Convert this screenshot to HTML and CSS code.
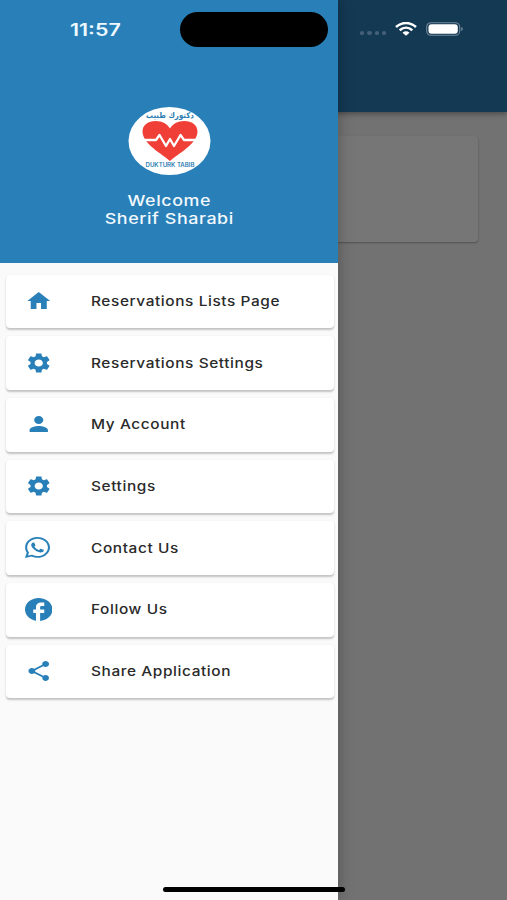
FILE: index.html
```html
<!DOCTYPE html>
<html lang="en">
<head>
    <meta charset="UTF-8">
    <meta name="viewport" content="width=device-width, initial-scale=1.0">
    <title>Dukturk Tabib</title>
    <link rel="stylesheet" href="styles.css">
</head>
<body>
    <div class="page">
        <div class="app-bar"></div>
        <div class="page-card"></div>
    </div>

    <div class="drawer">
        <div class="drawer-header">
            <svg class="logo" viewBox="0 0 82 68">
                <ellipse cx="41" cy="34" rx="41" ry="34" fill="#fff"/>
                <path d="M41.500 54C34 47 14 37 14 24.500C14 18 20 14 27 14C34 14 39 17 41.500 21.500C44 17 49 14 56 14C63 14 69 18 69 24.500C69 37 49 47 41.500 54Z" fill="#ef3f36"/>
                <path d="M12 33H27.500L31 28L37.500 39L41.500 32L45.500 39L52 28L55.500 33H71" fill="none" stroke="#fff" stroke-width="2.300" stroke-linejoin="round"/>
                <text class="logo-arabic" x="41.500" y="10.500" text-anchor="middle" textLength="48" lengthAdjust="spacingAndGlyphs">دكتورك طبيب</text>
                <text class="logo-latin" x="41.500" y="60.300" text-anchor="middle" textLength="49" lengthAdjust="spacingAndGlyphs">DUKTURK TABIB</text>
            </svg>
            <div class="welcome">Welcome<br>Sherif Sharabi</div>
        </div>
        <div class="menu">
            <a class="menu-item">
                <svg class="icon" viewBox="0 0 24 24" preserveAspectRatio="none"><path d="M10 20v-6h4v6h5v-8h3L12 3 2 12h3v8z"/></svg>
                <span class="label">Reservations Lists Page</span>
            </a>
            <a class="menu-item">
                <svg class="icon" viewBox="0 0 24 24" preserveAspectRatio="none"><path d="M19.140 12.940c.04-.3.060-.61.060-.94 0-.32-.02-.64-.07-.94l2.030-1.580c.18-.14.230-.41.120-.61l-1.920-3.320c-.12-.22-.37-.29-.59-.22l-2.390.96c-.5-.38-1.030-.7-1.620-.94l-.36-2.540c-.04-.24-.24-.41-.48-.41h-3.840c-.24 0-.43.170-.47.410l-.36 2.540c-.59.240-1.130.570-1.620.940l-2.390-.96c-.22-.08-.47 0-.59.220L2.740 8.870c-.12.210-.08.470.120.610l2.030 1.580c-.05.300-.09.630-.09.940s.02.640.070.940l-2.030 1.580c-.18.140-.23.410-.12.610l1.920 3.320c.12.220.370.290.590.220l2.390-.96c.5.380 1.030.700 1.620.940l.36 2.540c.05.240.240.410.480.410h3.840c.24 0 .44-.17.470-.41l.36-2.540c.59-.24 1.130-.56 1.620-.94l2.390.960c.22.080.470 0 .59-.22l1.920-3.320c.12-.22.070-.47-.12-.61zM12 15.600c-1.980 0-3.600-1.620-3.600-3.600s1.620-3.600 3.600-3.600 3.600 1.620 3.600 3.600-1.620 3.600-3.600 3.600z"/></svg>
                <span class="label">Reservations Settings</span>
            </a>
            <a class="menu-item">
                <svg class="icon" viewBox="0 0 24 24" preserveAspectRatio="none"><path d="M12 12c2.210 0 4-1.790 4-4s-1.790-4-4-4-4 1.790-4 4 1.790 4 4 4zm0 2c-2.670 0-8 1.340-8 4v2h16v-2c0-2.660-5.330-4-8-4z"/></svg>
                <span class="label">My Account</span>
            </a>
            <a class="menu-item">
                <svg class="icon" viewBox="0 0 24 24" preserveAspectRatio="none"><path d="M19.140 12.940c.04-.3.060-.61.060-.94 0-.32-.02-.64-.07-.94l2.030-1.580c.18-.14.230-.41.120-.61l-1.920-3.320c-.12-.22-.37-.29-.59-.22l-2.390.96c-.5-.38-1.030-.7-1.620-.94l-.36-2.540c-.04-.24-.24-.41-.48-.41h-3.840c-.24 0-.43.170-.47.410l-.36 2.540c-.59.240-1.130.570-1.620.940l-2.390-.96c-.22-.08-.47 0-.59.220L2.740 8.870c-.12.210-.08.470.120.610l2.030 1.580c-.05.300-.09.630-.09.940s.02.640.070.940l-2.030 1.580c-.18.140-.23.410-.12.610l1.920 3.320c.12.220.370.290.590.220l2.390-.96c.5.380 1.030.700 1.620.940l.36 2.540c.05.240.240.410.480.410h3.840c.24 0 .44-.17.470-.41l.36-2.540c.59-.24 1.130-.56 1.620-.94l2.390.960c.22.080.470 0 .59-.22l1.920-3.320c.12-.22.070-.47-.12-.61zM12 15.600c-1.980 0-3.600-1.620-3.600-3.600s1.620-3.600 3.600-3.600 3.600 1.620 3.600 3.600-1.620 3.600-3.600 3.600z"/></svg>
                <span class="label">Settings</span>
            </a>
            <a class="menu-item">
                <svg class="icon whatsapp" viewBox="0 0 448 448" preserveAspectRatio="none"><path d="M380.900 65.100C339 23.100 283.200 0 223.900 0 101.500 0 1.900 99.600 1.900 222c0 39.100 10.200 77.300 29.600 111L0 448l117.700-30.900c32.400 17.700 68.900 27 106.100 27h.1c122.300 0 224.100-99.600 224.100-222 0-59.300-25.200-115-67.100-157zM223.900 406.700c-33.200 0-65.700-8.900-94-25.700l-6.700-4-69.800 18.300L72 327.200l-4.400-7c-18.500-29.400-28.200-63.300-28.200-98.200 0-101.700 82.800-184.500 184.600-184.500 49.300 0 95.600 19.200 130.400 54.100 34.800 34.900 56.200 81.200 56.100 130.500 0 101.800-84.900 184.600-186.600 184.600zm101.200-138.200c-5.500-2.800-32.800-16.200-37.900-18-5.100-1.900-8.800-2.800-12.500 2.800-3.700 5.600-14.300 18-17.600 21.800-3.200 3.700-6.500 4.200-12 1.400-32.600-16.300-54-29.100-75.500-66-5.700-9.800 5.700-9.100 16.300-30.300 1.800-3.700.9-6.900-.5-9.700-1.400-2.800-12.500-30.100-17.100-41.200-4.500-10.800-9.100-9.300-12.500-9.500-3.200-.2-6.900-.2-10.600-.2-3.700 0-9.700 1.400-14.800 6.900-5.100 5.600-19.400 19-19.400 46.300 0 27.300 19.900 53.700 22.600 57.400 2.800 3.700 39.100 59.700 94.800 83.800 35.200 15.200 49 16.500 66.600 13.900 10.700-1.600 32.800-13.400 37.400-26.400 4.600-13 4.600-24.100 3.200-26.400-1.300-2.500-5-3.900-10.500-6.600z"/></svg>
                <span class="label">Contact Us</span>
            </a>
            <a class="menu-item">
                <svg class="icon facebook" viewBox="2 2 20 20" preserveAspectRatio="none"><path d="M22 12c0-5.520-4.480-10-10-10S2 6.480 2 12c0 4.840 3.440 8.870 8 9.800V15H8v-3h2V9.500C10 7.570 11.570 6 13.500 6H16v3h-2c-.55 0-1 .45-1 1v2h3v3h-3v6.950c5.050-.5 9-4.760 9-9.950z"/></svg>
                <span class="label">Follow Us</span>
            </a>
            <a class="menu-item">
                <svg class="icon" viewBox="0 0 24 24" preserveAspectRatio="none"><path d="M18 16.080c-.76 0-1.440.300-1.960.770L8.910 12.700c.05-.23.090-.46.090-.7s-.04-.47-.09-.7l7.050-4.110c.54.500 1.250.810 2.040.810 1.660 0 3-1.340 3-3s-1.340-3-3-3-3 1.340-3 3c0 .24.040.470.090.7L8.040 9.810C7.500 9.310 6.790 9 6 9c-1.660 0-3 1.340-3 3s1.340 3 3 3c.79 0 1.500-.31 2.040-.81l7.120 4.160c-.05.210-.08.430-.08.650 0 1.610 1.310 2.920 2.920 2.920s2.920-1.310 2.920-2.920-1.310-2.920-2.920-2.920z"/></svg>
                <span class="label">Share Application</span>
            </a>
        </div>
    </div>

    <!-- phone status bar -->
    <div class="status-bar">
        <span class="time">11:57</span>
        <div class="island"></div>
        <div class="status-icons">
            <div class="dots"><i></i><i></i><i></i><i></i></div>
            <svg class="wifi" viewBox="0 0 22 14" fill="none" stroke="#fff" stroke-width="2.500">
                <path d="M1 5C7 -0.300 15 -0.300 21 5"/>
                <path d="M4.700 8.300C8.500 5 13.500 5 17.300 8.300"/>
                <path d="M7.500 10.700Q11 8 14.500 10.700L11 13.800Z" fill="#fff" stroke="none"/>
            </svg>
            <svg class="battery" viewBox="0 0 38 14">
                <rect x=".7" y=".7" width="33" height="12.600" rx="4.300" fill="none" stroke="#72889a" stroke-width="1.100"/>
                <rect x="2.500" y="2.300" width="29.300" height="9.400" rx="3" fill="#fff"/>
                <path d="M35.200 5v4q1.600-.6 1.600-2t-1.600-2z" fill="#72889a"/>
            </svg>
        </div>
    </div>
    <div class="home-indicator"></div>
</body>
</html>
```
FILE: styles.css
```css
* {
    box-sizing: border-box;
}
body {
    position: relative;
    width: 507px;
    height: 900px;
    margin: 0;
    overflow: hidden;
    font-family: Inter, "Liberation Sans", sans-serif;
    background-color: #727272;
}
.page {
    height: 900px;
}
.app-bar {
    height: 112px;
    background-color: #143953;
    box-shadow: 0 2px 5px rgba(0, 0, 0, 0.35);
}
.page-card {
    height: 106px;
    margin: 24px 29px 0;
    border-radius: 4px;
    background-color: #767676;
    box-shadow: 0 1px 2px rgba(0, 0, 0, 0.3);
}
.drawer {
    position: absolute;
    top: 0;
    left: 0;
    width: 338px;
    height: 900px;
    background-color: #fafafa;
    box-shadow: 0 0 14px rgba(0, 0, 0, 0.28);
}
.drawer-header {
    display: flex;
    flex-direction: column;
    align-items: center;
    height: 263px;
    padding-top: 107px;
    background-color: #2980b9;
}
.logo {
    width: 83px;
    height: 68px;
}
.logo-arabic {
    font-family: "DejaVu Sans", sans-serif;
    font-size: 8px;
    font-weight: bold;
    fill: #2b7cb0;
}
.logo-latin {
    font-size: 5.500px;
    font-weight: 600;
    fill: #2b7cb0;
}
.welcome {
    margin-top: 17px;
    color: #f2f8fc;
    font-size: 15px;
    font-weight: 500;
    line-height: 18px;
    letter-spacing: 0.5px;
    text-align: center;
    transform: scaleX(1.19);
}
.menu {
    display: flex;
    flex-direction: column;
    gap: 8px;
    padding: 11.500px 4.5px 0 5.500px;
}
.menu-item {
    display: flex;
    align-items: center;
    height: 53.700px;
    padding: 0 0 1px 19px;
    border-radius: 4px;
    background-color: #fff;
    box-shadow: 0 1.500px 2px rgba(0, 0, 0, 0.22);
}
.icon {
    width: 27.500px;
    height: 24px;
    margin-right: 38.500px;
    fill: #2980b9;
}
.whatsapp {
    width: 25px;
    height: 21px;
    margin-right: 41px;
}
.facebook {
    width: 27.500px;
    height: 23px;
}
.label {
    color: #2a2a2a;
    font-size: 13px;
    font-weight: 500;
    letter-spacing: 0.5px;
    white-space: nowrap;
    transform: scaleX(1.185);
    transform-origin: left;
}
.status-bar {
    position: absolute;
    top: 0;
    left: 0;
    display: flex;
    align-items: center;
    width: 507px;
    height: 59px;
}
.time {
    width: 110px;
    margin-left: 70px;
    color: #eef8ff;
    font-size: 17px;
    font-weight: 600;
    transform: scaleX(1.26);
    transform-origin: left;
}
.island {
    width: 148px;
    height: 35px;
    border-radius: 18px;
    background-color: #000;
}
.status-icons {
    display: flex;
    align-items: center;
    margin-left: 32px;
    padding-bottom: 2px;
}
.dots {
    display: flex;
    gap: 3px;
    margin-top: 9px;
}
.dots i {
    width: 4.300px;
    height: 4px;
    border-radius: 50%;
    background-color: #446178;
}
.wifi {
    width: 22px;
    height: 14px;
    margin-left: 9px;
}
.battery {
    width: 38px;
    height: 14px;
    margin-left: 9px;
}
.home-indicator {
    position: absolute;
    left: 163px;
    top: 887px;
    width: 182px;
    height: 5px;
    border-radius: 3px;
    background-color: #000;
}
```
